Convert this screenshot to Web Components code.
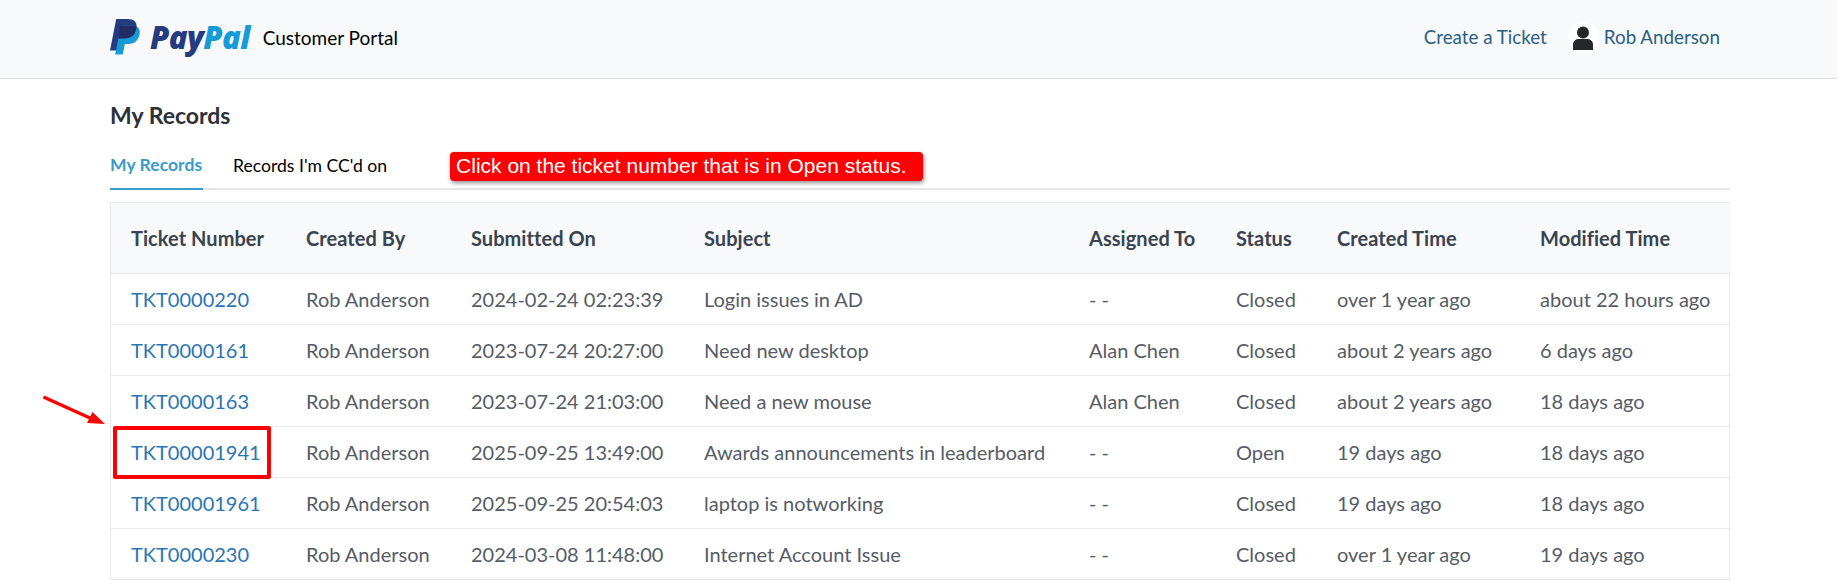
<!DOCTYPE html>
<html>
<head>
<meta charset="utf-8">
<title>My Records</title>
<style>
  html, body { margin: 0; padding: 0; background: #fff; height: 580px; overflow: hidden; font-family: Lato, "Liberation Sans", sans-serif; }
</style>
</head>
<body>
<portal-header></portal-header>
<records-page></records-page>

<script>
// components/portal-header.js
class PortalHeader extends HTMLElement {
  constructor() {
    super();
    this.attachShadow({ mode: 'open' });
    this.shadowRoot.innerHTML = `
      <style>
        :host {
          display: flex;
          align-items: center;
          justify-content: space-between;
          box-sizing: border-box;
          height: 79px;
          padding: 0 117px 0 110px;
          background: #f8f9fb;
          border-bottom: 1px solid #dcdee1;
        }
        .brand { display: flex; align-items: center; margin-top: -4px; }
        .brand svg { display: block; width: 30px; height: 36px; }
        .word {
          margin-left: 10px;
          font: italic 800 31px/36px "Open Sans", sans-serif;
          letter-spacing: -0.6px;
          color: #253b80;
        }
        .word span { color: #179bd7; }
        .name { margin-left: 13px; font-size: 19px; color: #000; }
        nav { display: flex; align-items: center; font-size: 18.8px; color: #2a6080; margin-top: -5px; }
        .avatar {
          width: 31px; height: 31px; margin: 2px 5px 0 21px;
          border-radius: 50%; background: #fff;
          display: flex; align-items: center; justify-content: center;
        }
        .avatar svg { width: 20px; height: 24px; display: block; }
      </style>
      <div class="brand">
        <svg viewBox="0 0 30 36" aria-label="PayPal logo">
          <path fill="#253b80" d="M6.2 0H17.6C24 0 27.6 3.2 26.4 9.4 25 16.6 20.4 19.6 14 19.6H10.2L8 31.4H0Z"/>
          <path fill="#179bd7" d="M11 6.6H21.4C27.6 6.6 30.6 9.600 29.6 15 28.4 22 23.8 25 18 25H14.8L12.8 35.4H5.2Z"/>
          <path fill="#222d65" d="M10 6.6H21.4C23.6 6.6 25.4 7 26.8 7.8 26.6 8.6 26.6 9 26.4 9.4 25 16.6 20.4 19.6 14 19.6H10.2L8 19.6Z"/>
        </svg>
        <div class="word">Pay<span>Pal</span></div>
        <div class="name">Customer Portal</div>
      </div>
      <nav>
        <span>Create a Ticket</span>
        <span class="avatar">
          <svg viewBox="0 0 20 24"><circle cx="10" cy="6.4" r="6" fill="#24282b"/><path fill="#24282b" d="M0 24V18.5C0 15 3 13 6 13H14C17 13 20 15 20 18.5V24Z"/></svg>
        </span>
        <span>Rob Anderson</span>
      </nav>
    `;
  }
}

// components/records-tabs.js
class RecordsTabs extends HTMLElement {
  constructor() {
    super();
    this.attachShadow({ mode: 'open' });
    this.shadowRoot.innerHTML = `
      <style>
        :host {
          display: flex;
          align-items: flex-end;
          height: 44px;
          border-bottom: 2px solid #e4e6e9;
          font-size: 17.6px;
        }
        .tab { height: 44px; line-height: 38px; box-sizing: border-box; margin-bottom: -2px; white-space: nowrap; }
        .tab.active { color: #3b9bcb; font-weight: 700; border-bottom: 2px solid #3b9bcb; width: 93px; }
        .tab.other { color: #000; margin-left: 30px; line-height: 40px; }
        .tip {
          align-self: flex-start;
          box-sizing: border-box;
          width: 473px; height: 29px;
          margin: 8px 0 0 63px;
          padding-left: 6px;
          background: #ff0000;
          color: #fff;
          border-radius: 4px;
          box-shadow: 1px 2px 4px rgba(0, 0, 0, 0.45);
          font: 21px/27px "Liberation Sans", sans-serif;
          white-space: nowrap;
        }
      </style>
      <div class="tab active">My Records</div>
      <div class="tab other">Records I'm CC'd on</div>
      <div class="tip">Click on the ticket number that is in Open status.</div>
    `;
  }
}

// components/records-table.js
class RecordsTable extends HTMLElement {
  constructor() {
    super();
    this.attachShadow({ mode: 'open' });
    this.columns = [
      ['Ticket Number', 175], ['Created By', 165], ['Submitted On', 233], ['Subject', 385],
      ['Assigned To', 147], ['Status', 101], ['Created Time', 203], ['Modified Time', 211]
    ];
    this.rows = [
      ['TKT0000220', 'Rob Anderson', '2024-02-24 02:23:39', 'Login issues in AD', '- -', 'Closed', 'over 1 year ago', 'about 22 hours ago'],
      ['TKT0000161', 'Rob Anderson', '2023-07-24 20:27:00', 'Need new desktop', 'Alan Chen', 'Closed', 'about 2 years ago', '6 days ago'],
      ['TKT0000163', 'Rob Anderson', '2023-07-24 21:03:00', 'Need a new mouse', 'Alan Chen', 'Closed', 'about 2 years ago', '18 days ago'],
      ['TKT00001941', 'Rob Anderson', '2025-09-25 13:49:00', 'Awards announcements in leaderboard', '- -', 'Open', '19 days ago', '18 days ago'],
      ['TKT00001961', 'Rob Anderson', '2025-09-25 20:54:03', 'laptop is notworking', '- -', 'Closed', '19 days ago', '18 days ago'],
      ['TKT0000230', 'Rob Anderson', '2024-03-08 11:48:00', 'Internet Account Issue', '- -', 'Closed', 'over 1 year ago', '19 days ago']
    ];
    const cols = this.columns.map(c => `<col style="width:${c[1]}px">`).join('');
    const head = this.columns.map(c => `<th>${c[0]}</th>`).join('');
    const body = this.rows.map(r => `<tr>${r.map((v, i) => i === 0 ? `<td><a>${v}</a></td>` : `<td>${v}</td>`).join('')}</tr>`).join('');
    this.shadowRoot.innerHTML = `
      <style>
        :host {
          display: block;
          margin-top: 12px;
          border: 1px solid #e6e8eb;
          border-bottom: 0;
        }
        table { border-collapse: collapse; table-layout: fixed; width: 100%; font-size: 20px; }
        th {
          height: 70px; padding: 0 0 0 20px;
          background: #f8f9fb;
          color: #3a4350;
          font-weight: 700;
          letter-spacing: 0.05px;
          text-align: left;
          white-space: nowrap;
          border-bottom: 1px solid #e6e8eb;
        }
        td {
          height: 50px; padding: 0 0 0 20px;
          color: #555c66;
          white-space: nowrap;
          border-bottom: 1px solid #e6e8eb;
        }
        a { color: #2a75b3; }
      </style>
      <table>
        <colgroup>${cols}</colgroup>
        <thead><tr>${head}</tr></thead>
        <tbody>${body}</tbody>
      </table>
    `;
  }
}

// components/records-page.js
class RecordsPage extends HTMLElement {
  constructor() {
    super();
    this.attachShadow({ mode: 'open' });
    this.shadowRoot.innerHTML = `
      <style>
        :host { display: block; position: relative; padding: 23px 107px 0 110px; }
        h1 { margin: 0; font-size: 23px; line-height: 26px; font-weight: 700; color: #2c3238; }
        records-tabs { margin-top: 16px; }
        /* annotation marks drawn over the table */
        .mark {
          position: absolute;
          left: 113px; top: 347px;
          width: 158px; height: 53px;
          box-sizing: border-box;
          border: 4px solid #ff0000;
          border-radius: 2px;
        }
        .arrow { position: absolute; left: 40px; top: 312px; width: 70px; height: 40px; }
      </style>
      <h1>My Records</h1>
      <records-tabs></records-tabs>
      <records-table></records-table>
      <div class="mark"></div>
      <svg class="arrow" viewBox="0 0 70 40">
        <path d="M3.500 6L50 27" stroke="#ff0000" stroke-width="3.5" fill="none"/>
        <path d="M65 33L47 32 52.500 21Z" fill="#ff0000"/>
      </svg>
    `;
  }
}

customElements.define('portal-header', PortalHeader);
customElements.define('records-tabs', RecordsTabs);
customElements.define('records-table', RecordsTable);
customElements.define('records-page', RecordsPage);
</script>
</body>
</html>
